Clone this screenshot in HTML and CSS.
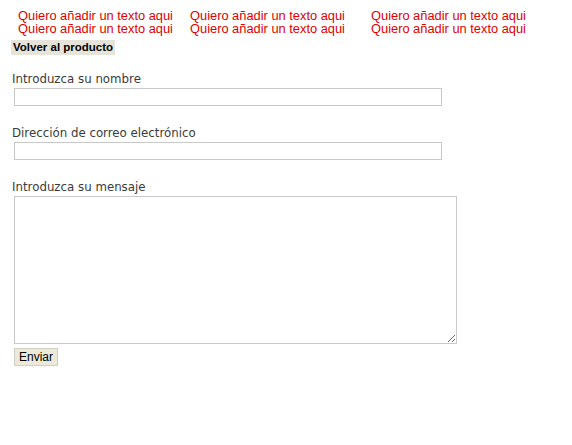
FILE: index.html
```html
<!DOCTYPE html>
<html lang="es">
<head>
<meta charset="utf-8">
<link rel="stylesheet" href="styles.css">
</head>
<body>
<div class="banner">
  <div class="col"><div>Quiero añadir un texto aqui</div><div>Quiero añadir un texto aqui</div></div>
  <div class="col"><div>Quiero añadir un texto aqui</div><div>Quiero añadir un texto aqui</div></div>
  <div class="col"><div>Quiero añadir un texto aqui</div><div>Quiero añadir un texto aqui</div></div>
</div>
<div class="back"><span class="back-btn">Volver al producto</span></div>
<form class="form">
  <label class="label first">Introduzca su nombre</label>
  <input class="field" type="text">
  <label class="label">Dirección de correo electrónico</label>
  <input class="field" type="text">
  <label class="label">Introduzca su mensaje</label>
  <textarea class="area"></textarea>
  <button class="send" type="button">Enviar</button>
</form>
</body>
</html>
```
FILE: styles.css
```css
html, body { margin: 0; padding: 0; background: #fff; }
body { font-family: "Liberation Sans", Arial, sans-serif; }
.banner {
  display: grid;
  grid-template-columns: 172px 181px 1fr;
  padding: 9px 0 0 18px;
  color: #e00000;
  font-size: 12.85px;
  line-height: 13px;
  height: 31px;
}
.back { display: flex; padding: 0 0 0 11px; height: 15px; }
.back-btn {
  display: block;
  background: #e6e4d8;
  font-weight: bold;
  font-size: 11.5px;
  line-height: 15px;
  padding: 0 2px;
  color: #000;
}
.form {
  display: flex;
  flex-direction: column;
  align-items: flex-start;
  padding: 0 0 0 12px;
}
.label {
  font-family: "DejaVu Sans", sans-serif;
  font-size: 11.8px;
  color: #3a3a3a;
  line-height: 14px;
  margin-top: 20px;
}
.label.first { margin-top: 17px; }
.field {
  box-sizing: border-box;
  width: 428px;
  height: 18px;
  margin: 2px 0 0 2px;
  border: 1px solid #c8c8c8;
  padding: 0;
  background: #fff;
}
.area {
  box-sizing: border-box;
  width: 443px;
  height: 148px;
  margin: 2px 0 0 2px;
  border: 1px solid #c8c8c8;
  padding: 0;
  resize: both;
}
.send {
  margin: 4px 0 0 2px;
  width: 44px;
  height: 18px;
  padding: 0;
  font-family: "Liberation Sans", Arial, sans-serif;
  font-size: 12px;
  background: #ece9d8;
  border: 1px solid #d0cfc4;
  color: #000;
}
```
